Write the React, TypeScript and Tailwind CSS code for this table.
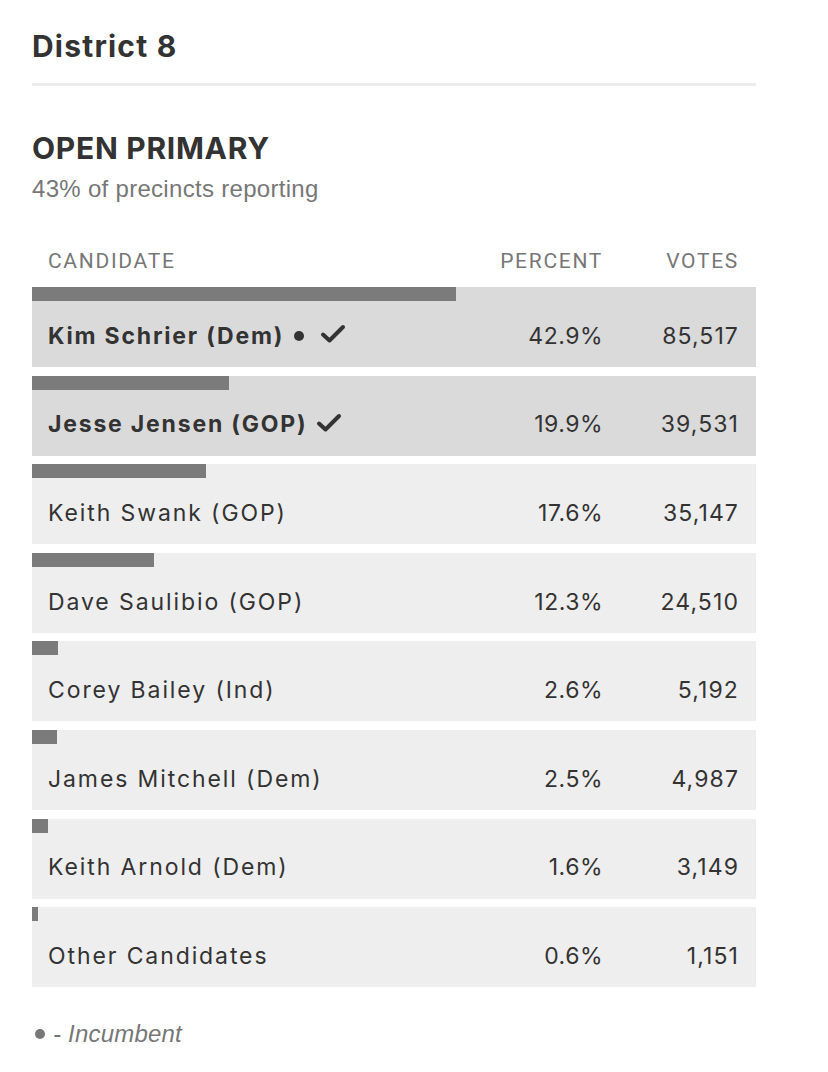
import React from "react";

type Row = { name: string; pct: number; votes: string; win?: boolean; inc?: boolean };

const rows: Row[] = [
  { name: "Kim Schrier (Dem)", pct: 42.9, votes: "85,517", win: true, inc: true },
  { name: "Jesse Jensen (GOP)", pct: 19.9, votes: "39,531", win: true },
  { name: "Keith Swank (GOP)", pct: 17.6, votes: "35,147" },
  { name: "Dave Saulibio (GOP)", pct: 12.3, votes: "24,510" },
  { name: "Corey Bailey (Ind)", pct: 2.6, votes: "5,192" },
  { name: "James Mitchell (Dem)", pct: 2.5, votes: "4,987" },
  { name: "Keith Arnold (Dem)", pct: 1.6, votes: "3,149" },
  { name: "Other Candidates", pct: 0.6, votes: "1,151" },
];

function Check({ after }: { after: boolean }) {
  return (
    <svg width="26" height="20" viewBox="0 0 26 20" className={`${after ? "ml-[16px]" : "ml-[8px]"} -mt-[4px]`}>
      <path d="M3 10.5 L9.5 16.5 L23 3" fill="none" stroke="#333" strokeWidth="4" strokeLinecap="round" strokeLinejoin="round" />
    </svg>
  );
}

function ResultRow({ r }: { r: Row }) {
  return (
    <div className={r.win ? "bg-[#dadada]" : "bg-[#eeeeee]"}>
      <div className="h-[14px] bg-[#7b7b7b]" style={{ width: `${r.pct * 9.88}px` }} />
      <div className="h-[66px] flex items-center pl-4 pr-[17px] pt-[4px] text-[23px] text-[#333]">
        <div className={`flex-1 flex items-center ${r.win ? "font-bold tracking-[1.8px]" : "tracking-[1.9px]"}`}>
          <span>{r.name}</span>
          {r.inc && <span className="ml-[10px] w-[10px] h-[10px] rounded-full bg-[#333]" />}
          {r.win && <Check after={!!r.inc} />}
        </div>
        <div className="w-[120px] text-right tracking-[0.5px]">{r.pct.toFixed(1)}%</div>
        <div className="w-[136px] text-right tracking-[1.1px]">{r.votes}</div>
      </div>
    </div>
  );
}

export default function App() {
  return (
    <div className="bg-white min-h-[1072px] font-['Inter',sans-serif] text-[#333]">
      <div className="ml-8 w-[724px] pt-[30px]">
        <h1 className="text-[30px] leading-[32px] font-bold tracking-[1.2px]">District 8</h1>
        <div className="mt-[21px] border-t-[3px] border-[#ececec]" />
        <h2 className="mt-[47px] text-[30px] leading-[30px] font-bold tracking-[0.7px]">OPEN PRIMARY</h2>
        <p className="mt-[14px] font-['Liberation_Sans',sans-serif] text-[24px] leading-[24px] text-[#777] tracking-[0.3px]">
          43% of precincts reporting
        </p>
        <div className="mt-[48px] flex pl-4 pr-[17px] font-['Roboto',sans-serif] text-[21px] leading-[24px] text-[#777] tracking-[1.7px]">
          <div className="flex-1">CANDIDATE</div>
          <div className="w-[120px] text-right">PERCENT</div>
          <div className="w-[136px] text-right">VOTES</div>
        </div>
        <div className="mt-[14px] flex flex-col gap-[8.6px]">
          {rows.map((r) => (
            <ResultRow key={r.name} r={r} />
          ))}
        </div>
        <div className="mt-[35px] flex items-center font-['Liberation_Sans',sans-serif] text-[24px] leading-[24px] text-[#777] italic tracking-[0.2px]">
          <span className="ml-[3px] w-[10px] h-[10px] rounded-full bg-[#777]" />
          <span className="ml-[8px]">- Incumbent</span>
        </div>
      </div>
    </div>
  );
}
